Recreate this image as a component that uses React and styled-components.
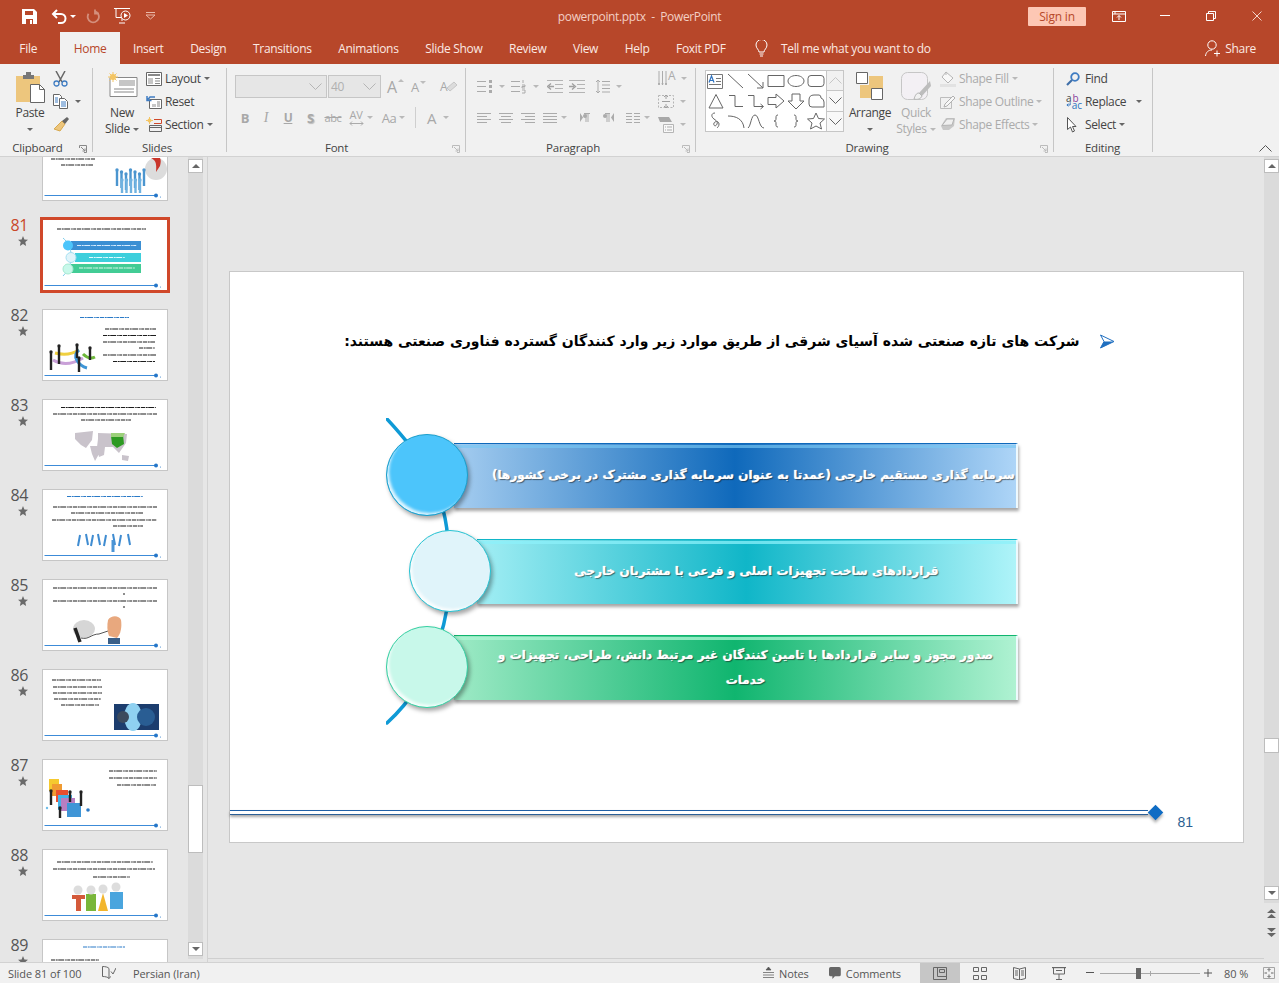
import React from 'react'
import styled, { createGlobalStyle } from 'styled-components'

const ACCENT = '#b7472a'
const INK = '#444'
const OFF = '#ababab'

const GlobalStyle = createGlobalStyle`
   html, body {
      margin: 0;
      padding: 0;
      overflow: hidden;
   }
   body {
      font-family: "Open Sans", "Noto Sans", sans-serif;
      font-size: 12px;
      color: ${INK};
      background: #e6e6e6;
   }
   svg {
      display: block;
   }
`

const Window = styled.div`
   width: 1279px;
   height: 983px;
   display: grid;
   grid-template-rows: 32px 32px 93px 1fr 21px;
   overflow: hidden;
`

/* title bar */
const TitleBar = styled.header`
   background: ${ACCENT};
   display: grid;
   grid-template-columns: 1fr auto 1fr;
   align-items: center;
   color: #fff;
`
const QuickAccess = styled.div`
   display: flex;
   align-items: center;
   padding-left: 22px;
`
const QuickItem = styled.div`
   width: ${p => p.$w}px;
   display: flex;
   align-items: center;
   gap: 3px;
`
const DocTitle = styled.div`
   font-size: 12px;
   letter-spacing: -0.35px;
   color: #f3cfc4;
   white-space: pre;
`
const WindowControls = styled.div`
   display: flex;
   align-items: center;
   justify-content: flex-end;
`
const SignIn = styled.button`
   width: 58px;
   height: 19px;
   border: 0;
   border-radius: 1px;
   padding: 0;
   margin-right: 10px;
   background: #fdc7b4;
   color: ${ACCENT};
   font: 12px "Open Sans", sans-serif;
   letter-spacing: -0.2px;
`
const ControlCell = styled.div`
   width: ${p => p.$w || 46}px;
   display: flex;
   justify-content: center;
`

/* tabs */
const TabBar = styled.nav`
   background: ${ACCENT};
   display: flex;
   align-items: stretch;
   padding-left: 6px;
   color: #fbe9e3;
   letter-spacing: -0.3px;
`
const Tab = styled.div`
   padding: 0 13.3px;
   margin-right: ${p => p.$mr || 0}px;
   display: flex;
   align-items: center;
   white-space: nowrap;
   background: ${p => (p.$active ? '#f1f1f1' : 'transparent')};
   color: ${p => (p.$active ? ACCENT : '#fbe9e3')};
`
const TellMe = styled.div`
   display: flex;
   align-items: center;
   gap: 13px;
   margin-left: 16px;
`
const Share = styled.div`
   display: flex;
   align-items: center;
   gap: 5px;
   margin-left: auto;
   padding-right: 23px;
`

/* ribbon */
const Ribbon = styled.section`
   position: relative;
   display: flex;
   background: #f1f1f1;
   border-bottom: 1px solid #d2d2d2;
   padding-top: 4px;
   letter-spacing: -0.35px;
`
const Group = styled.div`
   position: relative;
   width: ${p => p.$w}px;
   height: 88px;
   display: flex;
   flex-direction: column;
   &::after {
      content: '';
      position: absolute;
      right: 0;
      top: 0;
      width: 1px;
      height: 84px;
      background: #c6c6c6;
   }
`
const GroupBody = styled.div`
   flex: 1;
   display: flex;
   padding-left: ${p => p.$pl}px;
   gap: ${p => p.$gap || 0}px;
`
const GroupLabel = styled.div`
   height: 16px;
   line-height: 16px;
   font-size: 11.5px;
   letter-spacing: -0.2px;
   text-align: center;
   padding-top: 2px;
   padding-right: ${p => p.$pr || 0}px;
`
const Launcher = styled.span`
   position: absolute;
   right: 6px;
   bottom: 3px;
`
const BigButton = styled.div`
   width: ${p => p.$w}px;
   margin-left: ${p => p.$ml || 0}px;
   display: flex;
   flex-direction: column;
   align-items: center;
   padding-top: 4px;
   line-height: 16px;
   color: ${p => (p.$off ? OFF : INK)};
   white-space: nowrap;
`
const BigIcon = styled.div`
   height: 33px;
   display: flex;
   align-items: flex-start;
`
const CaretLine = styled.div`
   height: 16px;
   display: flex;
   align-items: center;
   gap: 3px;
`
const Caret = styled.span`
   display: inline-block;
   flex: none;
   width: 0;
   height: 0;
   border-left: 3px solid transparent;
   border-right: 3px solid transparent;
   border-top: 3px solid ${p => p.$c || (p.$off ? '#b9b9b9' : '#666')};
   margin-left: ${p => p.$ml || 0}px;
`
const TinyUp = styled.span`
   align-self: flex-start;
   margin: 3px 0 0 -2px;
   width: 0;
   height: 0;
   border-left: 3px solid transparent;
   border-right: 3px solid transparent;
   border-bottom: 3px solid #bdbdbd;
`
const TinyDown = styled(TinyUp)`
   border-bottom: 0;
   border-top: 3px solid #bdbdbd;
`
const SmallColumn = styled.div`
   display: flex;
   flex-direction: column;
   margin: -1px 0 0 ${p => p.$ml || 0}px;
`
const SmallRow = styled.div`
   height: 23px;
   display: flex;
   align-items: center;
   gap: ${p => p.$gap ?? 3}px;
   color: ${p => (p.$off ? OFF : INK)};
   white-space: nowrap;
`
const ControlRows = styled.div`
   width: ${p => (p.$w ? `${p.$w}px` : 'auto')};
   display: flex;
   flex-direction: column;
   gap: 8px;
   padding-top: 7px;
`
const ControlRow = styled.div`
   height: 23px;
   display: flex;
   align-items: center;
`
const Combo = styled.div`
   width: ${p => p.$w}px;
   height: 23px;
   box-sizing: border-box;
   background: #e6e6e6;
   border: 1px solid #c6c6c6;
   display: flex;
   align-items: center;
   justify-content: space-between;
   padding: 0 4px 0 2px;
   color: #b0b0b0;
   margin-right: 1px;
`
const Cell = styled.div`
   width: ${p => p.$w}px;
   margin-left: ${p => p.$ml || 0}px;
   display: flex;
   align-items: center;
   justify-content: ${p => p.$start ? 'flex-start' : 'center'};
   gap: 3px;
   color: #a8a8a8;
   font-family: ${p => p.$serif ? '"Liberation Serif", serif' : '"Open Sans", sans-serif'};
   font-size: ${p => p.$fs || 12}px;
   font-weight: ${p => p.$bold ? 700 : 400};
   font-style: ${p => p.$italic ? 'italic' : 'normal'};
   text-decoration: ${p => p.$under ? 'underline' : p.$strike ? 'line-through' : 'none'};
   text-shadow: ${p => p.$shadow ? '1px 1px 1px #bbb' : 'none'};
`
const AvStack = styled.span`
   display: flex;
   flex-direction: column;
   align-items: center;
   font-size: 11px;
   line-height: 11px;
   gap: 1px;
`
const EraserWrap = styled.span`
   display: flex;
   align-items: center;
   font-size: 12px;
`
const CellDivider = styled.div`
   width: 1px;
   height: 21px;
   background: #cfcfcf;
   margin: 0 11px 0 5px;
`
const IconLetter = styled.span`
   color: #ababab;
   font-size: 12px;
   margin-left: -7px;
   align-self: flex-start;
   line-height: 12px;
   padding-top: 3px;
`
const ReplaceGlyph = styled.span`
   width: 16px;
   display: flex;
   flex-direction: column;
   font-size: 10px;
   line-height: 7px;
   letter-spacing: 0;
   gap: 0;
`
const GlyphLine = styled.span`
   display: flex;
   align-items: center;
   height: 7px;
   color: ${p => p.$c};
   gap: 1px;
`
const GlyphPurple = styled.span`
   color: #8a3f9c;
`
const Gallery = styled.div`
   display: flex;
   height: 62px;
   margin-top: 2px;
`
const GalleryGrid = styled.div`
   width: 122px;
   height: 62px;
   box-sizing: border-box;
   background: #fff;
   border: 1px solid #c6c6c6;
   display: grid;
   grid-template-columns: repeat(6, 20px);
   grid-auto-rows: 20px;
`
const GalleryScroll = styled.div`
   width: 17px;
   display: flex;
   flex-direction: column;
`
const GalleryArrow = styled.div`
   flex: 1;
   box-sizing: border-box;
   border: 1px solid #c6c6c6;
   border-left: 0;
   margin-top: ${p => p.$first ? 0 : -1}px;
   display: flex;
   align-items: center;
   justify-content: center;
   background: ${p => p.$off ? '#f1f1f1' : '#f8f8f8'};
`
const CollapseRibbon = styled.span`
   position: absolute;
   right: 7px;
   bottom: 4px;
`

/* workspace */
const Workspace = styled.main`
   display: flex;
   min-height: 0;
   background: #e6e6e6;
`
const SlidePanel = styled.aside`
   width: 207px;
   display: flex;
   border-right: 1px solid #d2d2d2;
   height: 805px;
`
const ThumbList = styled.div`
   width: 188px;
   overflow: hidden;
`
const ThumbEntry = styled.div`
   height: 90px;
   display: flex;
   position: relative;
   top: -28px;
`
const ThumbMeta = styled.div`
   width: 42px;
   flex: none;
   display: flex;
   flex-direction: column;
   align-items: flex-end;
   padding-right: 14px;
   box-sizing: border-box;
   margin-top: -4px;
   gap: 1px;
   font-size: 16px;
   letter-spacing: -0.4px;
   line-height: 20px;
   color: ${p => (p.$active ? '#c9482a' : '#555')};
`
const ThumbFrame = styled.div`
   width: 126px;
   height: 72px;
   box-sizing: border-box;
   background: #fff;
   border: 1px solid ${p => (p.$active ? '#d0482a' : '#c6c6c6')};
   box-shadow: ${p => (p.$active ? '0 0 0 2px #d0482a' : 'none')};
   overflow: hidden;
   svg {
      filter: blur(0.5px);
   }
`
const ScrollBar = styled.div`
   position: relative;
   width: 15px;
   background: #dbdbdb;
   display: flex;
   flex-direction: column;
   justify-content: space-between;
   padding: 2px 0 3px;
   height: ${p => p.$h}px;
   box-sizing: border-box;
`
const ScrollButton = styled.div`
   height: 14px;
   box-sizing: border-box;
   background: #fff;
   border: 1px solid #bdbdbd;
   display: flex;
   align-items: center;
   justify-content: center;
`
const ScrollThumb = styled.div`
   position: absolute;
   left: 0;
   top: ${p => p.$top}px;
   width: 15px;
   height: ${p => p.$h}px;
   box-sizing: border-box;
   background: #fff;
   border: 1px solid #bdbdbd;
`
const ArrowUp = styled.span`
   width: 0;
   height: 0;
   border-left: 4px solid transparent;
   border-right: 4px solid transparent;
   border-bottom: 4px solid #666;
`
const ArrowDown = styled.span`
   width: 0;
   height: 0;
   border-left: 4px solid transparent;
   border-right: 4px solid transparent;
   border-top: 4px solid #666;
`
const Editor = styled.div`
   flex: 1;
   display: flex;
   flex-direction: column;
`
const Stage = styled.div`
   height: 802px;
   display: flex;
   align-items: center;
   justify-content: center;
   border-bottom: 1px solid #cfcfcf;
   box-sizing: border-box;
   padding-bottom: 1px;
`
const RightRail = styled.div`
   width: 15px;
   display: flex;
   flex-direction: column;
`
const PageJump = styled.div`
   display: flex;
   flex-direction: column;
   align-items: center;
   gap: 8px;
   padding-top: 6px;
`

/* slide */
const Slide = styled.article`
   width: 1015px;
   height: 572px;
   box-sizing: border-box;
   background: #fff;
   border: 1px solid #c8c8c8;
   display: flex;
   flex-direction: column;
`
const Heading = styled.div`
   display: flex;
   justify-content: flex-end;
   align-items: center;
   gap: 20px;
   height: 26px;
   margin-top: 56px;
   padding-right: 128px;
   color: #000;
`
const HeadingText = styled.h2`
   margin: 0;
   font: 700 14px "DejaVu Sans", sans-serif;
   white-space: nowrap;
`
const Diagram = styled.div`
   position: relative;
   width: 640px;
   margin: 64px 0 0 156px;
   padding: 16px 0 15px;
   display: flex;
   flex-direction: column;
   gap: 14px;
`
const DiagramArc = styled.svg`
   position: absolute;
   left: 0;
   top: 0;
`
const DiagramRow = styled.div`
   position: relative;
   display: flex;
   align-items: center;
   height: 82px;
   padding-left: ${p => p.$indent}px;
`
const Bubble = styled.div`
   position: relative;
   z-index: 1;
   flex: none;
   width: 82px;
   height: 82px;
   box-sizing: border-box;
   border-radius: 50%;
   background: ${p => p.$fill};
   border: 1px solid ${p => p.$ring};
   box-shadow: inset 3px -3px 3px -1px rgba(255, 255, 255, 0.85), 2px 3px 4px rgba(0, 0, 0, 0.35);
`
const Bar = styled.div`
   position: relative;
   width: ${p => p.$w}px;
   margin-left: -14px;
   height: 65px;
   box-sizing: border-box;
   display: flex;
   align-items: center;
   justify-content: center;
   padding: ${p => p.$pad};
   text-align: center;
   color: #fff;
   font: 700 ${p => p.$fs}px/25px "DejaVu Sans", sans-serif;
   letter-spacing: -0.55px;
   white-space: nowrap;
   text-shadow: 1px 1px 1px rgba(0, 0, 0, 0.5), 0 0 1px #fff;
   background: linear-gradient(90deg, ${p => p.$from}, ${p => p.$mid} 50%, ${p => p.$to});
   border-top: 1px solid ${p => p.$mid};
   border-right: 2px solid #eef9fd;
   box-shadow: 1px 3px 3px rgba(0, 0, 0, 0.35);
   &::before {
      content: '';
      position: absolute;
      left: 0;
      right: 0;
      top: 1px;
      height: 3px;
      background: ${p => p.$shine};
   }
`
const FooterRule = styled.div`
   margin-top: auto;
   display: flex;
   align-items: center;
   height: 16px;
   padding-right: 80px;
`
const RuleLine = styled.div`
   flex: 1;
   height: 3px;
   border-top: 1px solid #1f5fa5;
   border-bottom: 1px solid #2b5f96;
   box-shadow: 0 2px 3px rgba(0, 0, 0, 0.35);
`
const RuleDiamond = styled.div`
   width: 11px;
   height: 11px;
   margin: 0 2px 0 2px;
   transform: rotate(45deg);
   background: #0f6cc4;
   box-shadow: 2px 2px 3px rgba(0, 0, 0, 0.3);
`
const PageNumber = styled.div`
   margin: -6px 0 12px 948px;
   font: 14px/16px "Liberation Sans", sans-serif;
   color: #2c5f92;
`

/* status bar */
const StatusBar = styled.footer`
   background: #f1f1f1;
   border-top: 1px solid #d2d2d2;
   display: flex;
   align-items: center;
   font-size: 11px;
   letter-spacing: -0.1px;
   color: #555;
   padding-left: 8px;
   height: 21px;
   box-sizing: border-box;
`
const StatusItem = styled.div`
   display: flex;
   align-items: center;
   gap: 5px;
   height: 100%;
   white-space: nowrap;
   flex: none;
   width: ${p => (p.$w ? `${p.$w}px` : 'auto')};
   justify-content: ${p => (p.$center ? 'center' : 'flex-start')};
   background: ${p => (p.$active ? '#c6c6c6' : 'transparent')};
   margin-left: ${p => p.$ml || 0}px;
`
const ZoomTrack = styled.div`
   position: relative;
   width: 100px;
   height: 1px;
   background: #a8a8a8;
   margin: 0 4px 0 6px;
`
const ZoomHandle = styled.span`
   position: absolute;
   left: 36px;
   top: -5px;
   width: 5px;
   height: 11px;
   background: #666;
`
const ZoomTick = styled.span`
   position: absolute;
   left: 50px;
   top: -2px;
   width: 1px;
   height: 5px;
   background: #a8a8a8;
`

/* icons */
const Svg = ({ w, h, children, ...rest }) => (
   <svg width={w} height={h} viewBox={`0 0 ${w} ${h}`} fill="none" {...rest}>{children}</svg>
)

const SaveIcon = () => (
   <Svg w={15} h={15}>
      <path d="M0 0h12l3 3v12H0z" fill="#fff" />
      <path d="M3 2h8v4H3zM4 10h7v5H4z" fill={ACCENT} />
      <path d="M8 11h2v4H8z" fill="#fff" />
   </Svg>
)
const UndoIcon = () => (
   <Svg w={16} h={15}>
      <path d="M6 1 2 5l4 4M2 5h8a4.5 4.5 0 0 1 0 9H7" stroke="#fff" strokeWidth="2" />
   </Svg>
)
const RedoIcon = () => (
   <Svg w={14} h={15}>
      <path d="M9 2.4a5.6 5.6 0 1 1-6.5 2.4M9 .5v4H13" stroke="#d48f7c" strokeWidth="1.8" />
   </Svg>
)
const StartIcon = () => (
   <Svg w={17} h={16}>
      <path d="M0 .5h16M2 .5v9h6M8 10v3M5 15h6" stroke="#fff" />
      <circle cx="11.5" cy="7.5" r="4.5" stroke="#fff" fill={ACCENT} />
      <path d="m10 5 4 2.5-4 2.5z" fill="#fff" />
   </Svg>
)
const CustomizeIcon = () => (
   <Svg w={11} h={8}>
      <path d="M1 .5h9M1 3l4.5 4L10 3z" stroke="#eab8a8" />
   </Svg>
)
const BoardIcon = () => (
   <Svg w={14} h={11}>
      <path d="M.5.5h13v10H.5zM.5 3h13M3 .5V3" stroke="#fff" />
      <path d="m7 9V4.5M5 6.5l2-2 2 2" stroke="#fff" />
   </Svg>
)
const RestoreIcon = () => (
   <Svg w={10} h={10}>
      <path d="M.5 2.5h7v7h-7zM2.5 2.5v-2h7v7h-2" stroke="#fff" />
   </Svg>
)
const CloseIcon = () => (
   <Svg w={10} h={10}>
      <path d="m.5.5 9 9m0-9-9 9" stroke="#f3d4ca" />
   </Svg>
)
const BulbIcon = () => (
   <Svg w={13} h={17}>
      <path d="M4 12c0-2.500-3-3.500-3-7a5.500 5.500 0 0 1 11 0c0 3.500-3 4.500-3 7zM4.500 14h4M5 16h3" stroke="#fff" />
   </Svg>
)
const PersonIcon = () => (
   <Svg w={15} h={17}>
      <circle cx="7" cy="5" r="4.200" stroke="#fff" />
      <path d="M.5 16c.5-4 3-6 6.500-6M9 13.500h6M12 10.500v6" stroke="#fff" />
   </Svg>
)
const PasteIcon = () => (
   <Svg w={29} h={31}>
      <path d="M0 4h24v26H0z" fill="#edc67d" />
      <path d="M7 3h3V0h5v3h3v4H7z" fill="#777" />
      <path d="M14.500 12.500h9l5 5v13h-14z" fill="#fff" stroke="#666" />
      <path d="M23.500 12.500v5h5" stroke="#666" />
   </Svg>
)
const CutIcon = () => (
   <Svg w={15} h={16}>
      <path d="m3 0 6 11M12 0 6 11" stroke="#666" strokeWidth="1.500" />
      <circle cx="3.500" cy="12.500" r="2.500" stroke="#3f7cc2" strokeWidth="1.300" />
      <circle cx="11.500" cy="12.500" r="2.500" stroke="#3f7cc2" strokeWidth="1.300" />
   </Svg>
)
const CopyIcon = () => (
   <Svg w={15} h={15}>
      <path d="M.5.5h6l2 2v9h-8z" fill="#fff" stroke="#666" />
      <path d="M6.500 4.500h5l3 3v7h-8z" fill="#fff" stroke="#666" />
      <path d="M8 8h5M8 10h5M8 12h5M2 4h3M2 6h3M2 8h3" stroke="#3f7cc2" />
   </Svg>
)
const BrushIcon = () => (
   <Svg w={16} h={15}>
      <path d="m9 4 3 3-5 7-6-2z" fill="#edc67d" stroke="#d8a94e" />
      <path d="m9 4 5-4 2 2-4 5z" fill="#666" />
   </Svg>
)
const NewSlideIcon = () => (
   <Svg w={31} h={26}>
      <path d="M3 5.500h27v19H3z" fill="#fff" stroke="#888" />
      <path d="M12 8h16v6H12z" fill="#c6c6c6" />
      <path d="M7 17h20M7 20h20" stroke="#888" />
      <circle cx="6" cy="5" r="3" fill="#f4c563" />
      <path d="M6 0v10M1 5h10M2.500 1.500l7 7m0-7-7 7" stroke="#f4c563" />
   </Svg>
)
const LayoutIcon = () => (
   <Svg w={16} h={14}>
      <path d="M.5.500h15v13H.500z" fill="#fff" stroke="#666" />
      <path d="M2 3h12" stroke="#888" strokeWidth="2" />
      <path d="M2 6h5v6H2z" fill="#c6c6c6" />
      <path d="M9 6.500h5M9 9h5M9 11.500h5" stroke="#888" />
   </Svg>
)
const ResetIcon = () => (
   <Svg w={16} h={14}>
      <path d="M3.500 4.500h12v9h-12z" fill="#fff" stroke="#666" />
      <path d="M6 9h4v3H6z" fill="#c6c6c6" />
      <path d="M11 7h3M11 9h3M11 11h3" stroke="#888" />
      <path d="M9 2H4L1.500 5M1 1v4.500h4.500" stroke="#3f7cc2" strokeWidth="1.500" />
   </Svg>
)
const SectionIcon = () => (
   <Svg w={16} h={15}>
      <circle cx="3.500" cy="3.500" r="2" fill="#f4c563" />
      <path d="M3.500 0v7M0 3.500h7" stroke="#f4c563" />
      <path d="M8 2.500h7.500M8 6.500h7.500V2.500" stroke="#d0482a" />
      <path d="M3.500 8.500h12v6h-12zM3.500 10.500h12" stroke="#666" />
   </Svg>
)
const EraserIcon = () => (
   <Svg w={11} h={11}>
      <path d="m3 10 7-6-3-3-7 6z" fill="#dcdcdc" stroke="#c6c6c6" />
   </Svg>
)
const Rows = ({ w = 15, rows, x = 0, stroke = '#ababab', h = 14 }) => (
   <Svg w={w} h={h}>
      {rows.map(([a, b, y]) => <path key={y + '' + a} d={`M${a + x} ${y}.5H${b + x}`} stroke={stroke} />)}
   </Svg>
)
const BulletsIcon = () => (
   <Svg w={15} h={14}>
      <path d="M0 1.500h9M0 6.500h9M0 11.500h9" stroke="#ababab" />
      <path d="M12 0h3v3h-3zM12 5h3v3h-3zM12 10h3v3h-3z" fill="#ababab" />
   </Svg>
)
const NumbersIcon = () => (
   <Svg w={15} h={14}>
      <path d="M0 1.500h9M0 6.500h9M0 11.500h9M12 0v3M11 5h3v1.500h-3V8h3M11 10h3v3h-3" stroke="#ababab" />
   </Svg>
)
const IndentIcon = ({ flip }) => (
   <Svg w={16} h={13}>
      <path d="M0 .5h16M0 12.500h16M8 4.500h8M8 8.500h8" stroke="#b4b4b4" />
      <path d={flip ? 'M0 6.500h5M3 3.500l3.500 3-3.500 3' : 'M7 6.500H2M4 3.500l-3.500 3 3.500 3'} stroke="#a0a0a0" strokeWidth="1.300" />
   </Svg>
)
const SpacingIcon = () => (
   <Svg w={15} h={15}>
      <path d="M3 1v13M1 3l2-2 2 2M1 12l2 2 2-2M7 2.500h8M7 6h8M7 9.500h8M7 13h8" stroke="#ababab" />
   </Svg>
)
const MarkIcon = ({ flip }) => (
   <Svg w={12} h={9}>
      <path d={flip ? 'M12 0v9l-3-4.500z' : 'M0 0v9l3-4.500z'} fill="#ababab" />
      <path d={flip ? 'M3 .5H8M5 0v9M7 0v9' : 'M4 .5H10M6 0v9M8 0v9'} stroke="#ababab" />
      <circle cx={flip ? 3 : 5} cy="3" r="2" fill="#ababab" />
   </Svg>
)
const TextDirIcon = () => (
   <Svg w={11} h={16}>
      <path d="M1 0v14M4.500 0v14M8 0v14M.5 12l.5 2 .5-2M4 12l.5 2 .5-2M7.500 12l.5 2 .5-2" stroke="#ababab" />
   </Svg>
)
const AlignTextIcon = () => (
   <Svg w={16} h={15}>
      <path d="M.5 1.500h15v12H.5z" stroke="#b5b5b5" strokeDasharray="2 1.500" />
      <path d="M8 1v4M6 3l2-2 2 2M8 14v-4M6 12l2 2 2-2M4 7.500h8" stroke="#a0a0a0" />
   </Svg>
)
const SmartIcon = () => (
   <Svg w={16} h={16}>
      <path d="m0 0h11l3 5H2z" fill="#a8a8a8" />
      <path d="M5.500 7.500h10v8h-10z" fill="#f8f8f8" stroke="#b5b5b5" />
      <path d="M7 10h1M9 10h5M7 13h1M9 13h5" stroke="#ababab" />
   </Svg>
)
const ArrangeIcon = () => (
   <Svg w={28} h={29}>
      <path d="M13 4h14v13h-14zM4 13h13v13H4z" fill="#edc67d" />
      <path d="M.5.5h11v11H.5z" fill="#fff" stroke="#666" />
      <path d="M15.500 16.500h11v11h-11z" fill="#fff" stroke="#666" />
   </Svg>
)
const QuickStylesIcon = () => (
   <Svg w={30} h={30}>
      <rect x=".5" y=".5" width="26" height="27" rx="6" fill="#f3f0f4" stroke="#c6c6c6" />
      <path d="M29 9 18 21l3 3L30 14z" fill="#bdbdbd" />
      <path d="M18 21c-3 0-4 3-5 6 3 1 7 0 8-3z" fill="#f1f1f1" stroke="#b5b5b5" />
   </Svg>
)
const FillIcon = () => (
   <Svg w={16} h={16}>
      <path d="m6 1 7 6-5 5-6-6z" fill="#f8f8f8" stroke="#b5b5b5" />
      <path d="M6 1v3" stroke="#b5b5b5" />
      <path d="M0 13h16v3H0z" fill="#e2e2e2" />
   </Svg>
)
const OutlineIcon = () => (
   <Svg w={16} h={15}>
      <path d="M.5 3.500h11v11H.5z" stroke="#bdbdbd" />
      <path d="m5 10 8-8 2 2-8 8-3 1z" fill="#f8f8f8" stroke="#b0b0b0" />
   </Svg>
)
const EffectsIcon = () => (
   <Svg w={16} h={15}>
      <path d="M1 9 6 1h9l-1 8-5 4H3z" fill="#c8c8c8" />
      <path d="M2 8.500 7 2h7l-2 6z" fill="#efefef" stroke="#b5b5b5" />
   </Svg>
)
const FindIcon = () => (
   <Svg w={14} h={14}>
      <circle cx="9" cy="5" r="3.800" stroke="#3f7cc2" strokeWidth="1.800" />
      <path d="M6 8 1 13" stroke="#3f6fa8" strokeWidth="2.200" />
   </Svg>
)
const SelectIcon = () => (
   <Svg w={13} h={16}>
      <path d="M1.500.5v12l3-2.500 2 5 2-1-2-4.500H10z" fill="#fff" stroke="#555" />
   </Svg>
)
const LauncherIcon = ({ c = '#888' }) => (
   <Svg w={8} h={8}>
      <path d="M.5 3V.5H7.500V7.500H5M2 2l4 4M6 3.500V6H3.500" stroke={c} />
   </Svg>
)
const Chevron = ({ up, c = '#666' }) => (
   <Svg w={13} h={7}>
      <path d={up ? 'M.5 6.500l6-6 6 6' : 'M.5.5l6 6 6-6'} stroke={c} />
   </Svg>
)

const SHAPES = [
   'M3 14.500 17 14.500',
   'M2 3l15 14',
   'M2 3l15 14M17 11v6h-6',
   'M2 4.500h16v11H2z',
   'M10 4.500c4.500 0 8 2.500 8 5.500s-3.500 5.500-8 5.500-8-2.500-8-5.500 3.500-5.500 8-5.500z',
   'M5 4.500h10q3 0 3 3v5q0 3-3 3H5q-3 0-3-3v-5q0-3 3-3z',
   'M10 3.500 17 17H3z',
   'M3 4.500h6v11h8',
   'M2 4.500h6v11h9M14.500 13l3 2.500-3 2.500',
   'M2 6.500h8V3l8 7-8 7v-3.500H2z',
   'M6 3h8v7h4l-8 8-8-8h4z',
   'M3 9q0-5 5-5h5q2 0 2 3 3 1 3 4v5H6q-3 0-3-3z',
   'M9 2C5 2 5 6 8 8c3 2 4 3 3 5-1 3-4 2-3-1 1-2 5-2 5 1 0 2-1 3-2 4',
   'M2 5c8 0 15 3 16 12',
   'M2 17C5 15 5 4 9 4s4 13 9 13',
   'M12 4c-2 0-2 1-2 3s0 3-2 3c2 0 2 1 2 3s0 3 2 3',
   'M8 4c2 0 2 1 2 3s0 3 2 3c-2 0-2 1-2 3s0 3-2 3',
   'M10 2l2.500 5.500 6 .5-4.500 4 1.500 6-5.500-3-5.500 3 1.500-6L1.500 8l6-.5z',
]

const ShapeCell = ({ d, first }) => (
   <Svg w={20} h={20}>
      {first && <path d="M1.500 3.500h15v14h-15z" fill="#fff" stroke="#777" />}
      {first && <path d="M10 7.500h5M10 10.500h5M3 13.500h12" stroke="#777" />}
      {first && <path d="M3 11.500 5.500 5 8 11.500M4 9.500h3" stroke="#2f73c0" strokeWidth="1.200" />}
      {!first && <path d={d} stroke="#666" />}
   </Svg>
)

/* thumbnails */
const Scribble = ({ lines, color = '#1c1c1c' }) => lines.map(([a, b, y]) => (
   <path key={`${a}-${y}`} d={`M${a} ${y}H${b}`} stroke={color} strokeWidth="1.100" strokeDasharray="4 .7 2 .5 6 1 1.500 .5 3 .8" />
))

const People = ({ x, y, c = '#222', h = 18 }) => (
   <g>
      <circle cx={x} cy={y} r="1.700" fill={c} />
      <path d={`M${x} ${y + 1}V${y + h}`} stroke={c} strokeWidth="2.400" />
   </g>
)

const THUMBS = {
   80: (
      <>
         <Scribble lines={[[8, 52, 29], [18, 50, 35]]} />
         <ellipse cx="113" cy="39" rx="11" ry="11" fill="#dcdcdc" />
         <path d="M108 28c4 2 6 4 5 14l4-6c1-4 1-6 0-8z" fill="#c9352a" />
         {[0, 1, 2, 3, 4, 5, 6].map(i => <People key={i} x={74 + i * 4.500} y={40 + (i % 3) * 2} c="#4b95cf" h={16} />)}
         {[0, 1, 2, 3, 4].map(i => <People key={i} x={79 + i * 4.500} y={50} c="#6fb2e0" h={13} />)}
      </>
   ),
   81: (
      <>
         <Scribble lines={[[14, 103, 9]]} />
         <path d="M20 18c10 8 12 26 0 38" stroke="#7fcdeb" />
         <rect x="28" y="21" width="70" height="9" fill="#3b8fd3" />
         <rect x="32" y="33" width="66" height="9" fill="#3ecfdc" />
         <rect x="28" y="44" width="70" height="9" fill="#42cc95" />
         <Scribble lines={[[34, 94, 25.500]]} color="#d8ecff" />
         <Scribble lines={[[46, 82, 37.500]]} color="#e4fbff" />
         <Scribble lines={[[36, 92, 48]]} color="#def8ec" />
         <circle cx="25" cy="25.500" r="5" fill="#4cc5fb" />
         <circle cx="28" cy="37.500" r="5" fill="#e0f4fa" stroke="#a5dff0" />
         <circle cx="25" cy="49" r="5" fill="#c8f8ea" stroke="#a5e8d0" />
      </>
   ),
   82: (
      <>
         <Scribble lines={[[37, 86, 7.500]]} color="#2a7ac7" />
         <Scribble lines={[[62, 113, 19], [60, 113, 25.500], [60, 112, 32], [96, 112, 38], [60, 113, 45], [70, 112, 51.500]]} />
         <path d="M10 50c10 6 20 4 30-2" stroke="#c9a0d8" strokeWidth="3" />
         <path d="M12 43c8 2 16 2 24-3" stroke="#f0d040" strokeWidth="3" />
         <path d="M36 40c-8 6 0 16 8 18" stroke="#3f95d6" strokeWidth="3" />
         <path d="M40 44c4 4 8 5 12 3" stroke="#6fb83c" strokeWidth="3" />
         <People x={8} y={42} /><People x={16} y={36} /><People x={34} y={35} h={13} /><People x={47} y={38} h={12} /><People x={36} y={48} h={14} />
      </>
   ),
   83: (
      <>
         <Scribble lines={[[18, 113, 7.500], [10, 114, 14], [38, 88, 20]]} />
         <path d="M32 33 50 31l-1 9-6 8-5-3-6-6zM47 46h10l-1 8-4 7-3-7zM55 33l29 1-1 9-7 10-6-6h-8l-1 8-5 2-2-10 1-8zM79 55l7 1-1 5-6-1z" fill="#c9c3cb" />
         <path d="M68 36l12-1 1 9-7 4-5-4z" fill="#2d9a22" />
         <path d="M68 33h14l-2 4H68z" fill="#9cd07a" />
      </>
   ),
   84: (
      <>
         <Scribble lines={[[24, 100, 6.500]]} color="#2a7ac7" />
         <Scribble lines={[[10, 114, 17], [28, 100, 23], [9, 114, 30], [70, 100, 36]]} />
         {[37, 43, 50, 55, 63, 70, 78, 85].map((x, i) => (
            <path key={x} d={`M${x} ${45 - (i % 2)}l${i % 2 ? 2 : -2} 11`} stroke="#3f8cd1" strokeWidth="2" />
         ))}
         <path d="M70 50v12" stroke="#4b95d6" strokeWidth="3" />
      </>
   ),
   85: (
      <>
         <Scribble lines={[[10, 114, 8], [80, 82, 14], [10, 114, 21], [80, 82, 27]]} />
         <ellipse cx="41" cy="49" rx="11" ry="9" fill="#d6d6d6" />
         <path d="M32 48l5 14" stroke="#222" strokeWidth="3.500" />
         <path d="M38 58c8 2 10-4 18-4l9-3" stroke="#555" />
         <path d="M65 40c3-5 11-5 13 0 1 6 0 14-4 18l-8-2c-2-5-2-11-1-16z" fill="#e8a87e" />
         <path d="M65 58h12v6H65z" fill="#3a5f88" />
      </>
   ),
   86: (
      <>
         <Scribble lines={[[9, 58, 10], [10, 59, 17], [10, 59, 23], [11, 58, 29], [18, 56, 35]]} />
         <rect x="71" y="34" width="45" height="26" fill="#1c3d6e" />
         <ellipse cx="90" cy="47" rx="9" ry="14" fill="#8fd1f1" />
         <circle cx="103" cy="47" r="9" fill="#295d93" />
         <circle cx="80" cy="47" r="6" fill="#3b4a5e" />
      </>
   ),
   87: (
      <>
         <Scribble lines={[[66, 114, 11], [66, 114, 18], [74, 113, 25]]} />
         <rect x="6" y="19" width="10" height="12" fill="#f5c92f" />
         <rect x="9" y="24" width="10" height="12" fill="#f09b32" />
         <rect x="13" y="30" width="12" height="12" fill="#e94f2f" />
         <rect x="15" y="35" width="14" height="15" fill="#45b1e8" />
         <rect x="18" y="38" width="14" height="13" fill="#b77ec2" />
         <rect x="24" y="43" width="14" height="14" fill="#3f95d6" />
         <People x={8} y={31} h={14} /><People x={27} y={32} h={10} /><People x={38} y={32} h={14} /><People x={17} y={48} h={10} />
         <circle cx="45" cy="50" r="1.800" fill="#2a7ac7" /><circle cx="4" cy="48" r="1.200" fill="#70bde8" />
      </>
   ),
   88: (
      <>
         <Scribble lines={[[14, 110, 12], [10, 112, 19], [50, 87, 27]]} />
         <rect x="29" y="45" width="13" height="4" fill="#d45a3a" /><rect x="33" y="45" width="5" height="16" fill="#d45a3a" />
         <rect x="43" y="44" width="10" height="17" fill="#79b63a" />
         <path d="M55 61l5-18 5 18z" fill="#f2b52c" />
         <rect x="67" y="42" width="13" height="17" fill="#4aa5de" />
         <circle cx="35" cy="40" r="4.500" fill="#ddd" /><circle cx="48" cy="40" r="4.500" fill="#ddd" /><circle cx="60" cy="39" r="4.500" fill="#ddd" /><circle cx="73" cy="37" r="4.500" fill="#ddd" />
      </>
   ),
   89: (
      <>
         <Scribble lines={[[40, 82, 7]]} color="#2a7ac7" />
         <Scribble lines={[[8, 56, 20]]} />
      </>
   ),
}

const ThumbArt = ({ n }) => (
   <svg width="124" height="70" viewBox="0 0 124 70" fill="none">
      {THUMBS[n]}
      <path d="M1.500 65.500H112" stroke="#3c8bd8" strokeWidth="1.200" />
      <circle cx="113" cy="65.500" r="2" fill="#2576c8" />
      <circle cx="117.500" cy="67" r=".5" fill="#2576c8" />
   </svg>
)

const StarIcon = () => (
   <Svg w={10} h={10}>
      <path d="m5 0 1.400 3.400L10 3.800 7.300 6.100 8.100 10 5 8 1.900 10l.8-3.900L0 3.800l3.600-.4z" fill="#6a6a6a" />
   </Svg>
)

const BulletArrow = () => (
   <Svg w={15} h={15}>
      <path d="M.5 1 14 7.500.5 14 4 7.500z" fill="#fff" stroke="#1f6fc0" />
      <path d="M4 7.500h10L.5 14z" fill="#1f6fc0" />
   </Svg>
)

/* status icons */
const NotesIcon = () => (
   <Svg w={11} h={12}>
      <path d="M3 3l2.500-3L8 3zM0 5.500h11M0 8h11M0 10.500h11" fill="#555" stroke="#555" strokeWidth=".7" />
   </Svg>
)
const CommentIcon = () => (
   <Svg w={14} h={14}>
      <path d="M2 0h10q2 0 2 2v7q0 2-2 2H7l-3 3v-3H2q-2 0-2-2V2q0-2 2-2z" fill="#666" />
   </Svg>
)
const SpellIcon = () => (
   <Svg w={14} h={14}>
      <path d="M7 2.500C6 1 3 .5.500.5v10c2.500 0 5.500.5 6.500 2 1-1.500 2-2 2-2M7 2.500v10M9 5.500l2 2.500 3-6" stroke="#666" />
   </Svg>
)
const NormalIcon = () => (
   <Svg w={14} h={13}>
      <path d="M.5.5h13v12H.5zM4.500.5v9M4.500 9.500h9M6.500 2.500h5v3h-5z" stroke="#666" />
   </Svg>
)
const SorterIcon = () => (
   <Svg w={14} h={13}>
      <path d="M.5.5h5v4h-5zM8.500.5h5v4h-5zM.5 8.500h5v4h-5zM8.500 8.500h5v4h-5z" stroke="#666" />
   </Svg>
)
const ReadingIcon = () => (
   <Svg w={13} h={13}>
      <path d="M.5.500 6.500 2l6-1.500v11l-6 1.500-6-1.500zM6.500 2v11M2 4h3M2 6h3M2 8h3M8 4h3M8 6h3M8 8h3" stroke="#666" />
   </Svg>
)
const ShowIcon = () => (
   <Svg w={14} h={13}>
      <path d="M0 .5h14" stroke="#666" strokeWidth="1.400" />
      <path d="M1.500 1v6h11V1M4 3.500h6M7 7v5M4 12.500h6" stroke="#666" />
   </Svg>
)
const FitIcon = () => (
   <Svg w={12} h={12}>
      <path d="M.5.500h11v11H.5z" stroke="#a5a5a5" />
      <path d="M6 2v2.500M4.500 3 6 1.500 7.500 3M6 10V7.500M4.500 9 6 10.500 7.500 9M1.500 6h2.500M8 6h2.500" stroke="#666" />
   </Svg>
)
const JumpIcon = ({ down }) => (
   <Svg w={9} h={10}>
      <path d={down ? 'M4.500 5 9 1H0zM4.500 10 9 6H0z' : 'M4.500 0 9 4H0zM4.500 5 9 9H0z'} fill="#666" />
   </Svg>
)

const Small = ({ icon, label, caret, off, caretGap }) => (
   <SmallRow $off={off}>
      {icon}
      <span>{label}</span>
      {caret && <Caret $off={off} $ml={caretGap} />}
   </SmallRow>
)

const TABS = ['Insert', 'Design', 'Transitions', 'Animations', 'Slide Show', 'Review', 'View', 'Help', 'Foxit PDF']
const NUMBERS = [80, 81, 82, 83, 84, 85, 86, 87, 88, 89]

const App = () => {
   return (
      <Window>
         <GlobalStyle />
         <TitleBar>
            <QuickAccess>
               <QuickItem $w={29}><SaveIcon /></QuickItem>
               <QuickItem $w={35}><UndoIcon /><Caret $c="#fff" /></QuickItem>
               <QuickItem $w={28}><RedoIcon /></QuickItem>
               <QuickItem $w={31}><StartIcon /></QuickItem>
               <QuickItem $w={20}><CustomizeIcon /></QuickItem>
            </QuickAccess>
            <DocTitle>powerpoint.pptx  -  PowerPoint</DocTitle>
            <WindowControls>
               <SignIn>Sign in</SignIn>
               <ControlCell><BoardIcon /></ControlCell>
               <ControlCell>
                  <Svg w={10} h={2}><path d="M0 .5h10" stroke="#fff" /></Svg>
               </ControlCell>
               <ControlCell><RestoreIcon /></ControlCell>
               <ControlCell $w={45}><CloseIcon /></ControlCell>
            </WindowControls>
         </TitleBar>

         <TabBar>
            <Tab $mr={10}>File</Tab>
            <Tab $active>Home</Tab>
            {TABS.map(t => <Tab key={t}>{t}</Tab>)}
            <TellMe><BulbIcon />Tell me what you want to do</TellMe>
            <Share><PersonIcon />Share</Share>
         </TabBar>

         <Ribbon>
            <Group $w={93}>
               <GroupBody $pl={14} $gap={7}>
                  <BigButton $w={32}>
                     <BigIcon><PasteIcon /></BigIcon>
                     <span>Paste</span>
                     <CaretLine><Caret /></CaretLine>
                  </BigButton>
                  <SmallColumn>
                     <SmallRow><CutIcon /></SmallRow>
                     <SmallRow $gap={7}><CopyIcon /><Caret /></SmallRow>
                     <SmallRow><BrushIcon /></SmallRow>
                  </SmallColumn>
               </GroupBody>
               <GroupLabel $pr={18}>Clipboard</GroupLabel>
               <Launcher><LauncherIcon /></Launcher>
            </Group>

            <Group $w={134}>
               <GroupBody $pl={9} $gap={4}>
                  <BigButton $w={40}>
                     <BigIcon><NewSlideIcon /></BigIcon>
                     <span>New</span>
                     <CaretLine>Slide<Caret /></CaretLine>
                  </BigButton>
                  <SmallColumn>
                     <Small icon={<LayoutIcon />} label="Layout" caret />
                     <Small icon={<ResetIcon />} label="Reset" />
                     <Small icon={<SectionIcon />} label="Section" caret />
                  </SmallColumn>
               </GroupBody>
               <GroupLabel $pr={6}>Slides</GroupLabel>
            </Group>

            <Group $w={239}>
               <GroupBody $pl={8}>
                  <ControlRows>
                     <ControlRow>
                        <Combo $w={92}><span /><Chevron c="#b5b5b5" /></Combo>
                        <Combo $w={53}><span>40</span><Chevron c="#b5b5b5" /></Combo>
                        <Cell $w={24} $fs={16} $ml={5} $start>A<TinyUp /></Cell>
                        <Cell $w={20} $fs={13} $ml={0} $start>A<TinyDown /></Cell>
                        <Cell $w={22} $start $ml={9}>
                           <EraserWrap>A<EraserIcon /></EraserWrap>
                        </Cell>
                     </ControlRow>
                     <ControlRow>
                        <Cell $w={20} $bold $fs={13}>B</Cell>
                        <Cell $w={22} $italic $serif $fs={14}>I</Cell>
                        <Cell $w={22} $bold $under>U</Cell>
                        <Cell $w={23} $bold $fs={13} $shadow>S</Cell>
                        <Cell $w={22} $strike $fs={11}>abc</Cell>
                        <Cell $w={33}>
                           <AvStack>
                              AV
                              <Svg w={15} h={5}><path d="M1 2.500h13M3 .5l-2 2 2 2M12 .5l2 2-2 2" stroke="#ababab" /></Svg>
                           </AvStack>
                           <Caret $off />
                        </Cell>
                        <Cell $w={33} $fs={13}>Aa<Caret $off /></Cell>
                        <CellDivider />
                        <Cell $w={30} $fs={15} $start>A<Caret $off $ml={4} /></Cell>
                     </ControlRow>
                  </ControlRows>
               </GroupBody>
               <GroupLabel $pr={20}>Font</GroupLabel>
               <Launcher><LauncherIcon c="#bbb" /></Launcher>
            </Group>

            <Group $w={230}>
               <GroupBody $pl={11}>
                  <ControlRows $w={181}>
                     <ControlRow>
                        <Cell $w={34} $start><BulletsIcon /><Caret $off $ml={4} /></Cell>
                        <Cell $w={36} $start><NumbersIcon /><Caret $off $ml={4} /></Cell>
                        <Cell $w={22} $start><IndentIcon /></Cell>
                        <Cell $w={26} $start><IndentIcon flip /></Cell>
                        <Cell $w={30} $start><SpacingIcon /><Caret $off $ml={3} /></Cell>
                     </ControlRow>
                     <ControlRow>
                        <Cell $w={22} $start><Rows rows={[[0, 14, 2], [0, 10, 5], [0, 14, 8], [0, 10, 11]]} /></Cell>
                        <Cell $w={22} $start><Rows rows={[[0, 14, 2], [2, 12, 5], [0, 14, 8], [2, 12, 11]]} /></Cell>
                        <Cell $w={22} $start><Rows rows={[[0, 14, 2], [4, 14, 5], [0, 14, 8], [4, 14, 11]]} /></Cell>
                        <Cell $w={37} $start><Rows rows={[[0, 14, 2], [0, 14, 5], [0, 14, 8], [0, 14, 11]]} /><Caret $off /></Cell>
                        <Cell $w={22} $start><MarkIcon /></Cell>
                        <Cell $w={24} $start><MarkIcon flip /></Cell>
                        <Cell $w={30} $start><Rows rows={[[0, 6, 2], [8, 14, 2], [0, 6, 5], [8, 14, 5], [0, 6, 8], [8, 14, 8], [0, 6, 11], [8, 14, 11]]} /><Caret $off /></Cell>
                     </ControlRow>
                  </ControlRows>
                  <SmallColumn>
                     <SmallRow $gap={6}><TextDirIcon /><IconLetter>A</IconLetter><Caret $off /></SmallRow>
                     <SmallRow $gap={6}><AlignTextIcon /><Caret $off /></SmallRow>
                     <SmallRow $gap={6}><SmartIcon /><Caret $off /></SmallRow>
                  </SmallColumn>
               </GroupBody>
               <GroupLabel $pr={16}>Paragraph</GroupLabel>
               <Launcher><LauncherIcon c="#bbb" /></Launcher>
            </Group>

            <Group $w={358}>
               <GroupBody $pl={9}>
                  <Gallery>
                     <GalleryGrid>
                        {SHAPES.map((d, i) => <ShapeCell key={d} d={d} first={i === 0} />)}
                     </GalleryGrid>
                     <GalleryScroll>
                        <GalleryArrow $first $off><Chevron up c="#c6c6c6" /></GalleryArrow>
                        <GalleryArrow><Chevron c="#666" /></GalleryArrow>
                        <GalleryArrow><Chevron c="#666" /></GalleryArrow>
                     </GalleryScroll>
                  </Gallery>
                  <BigButton $w={50} $ml={1}>
                     <BigIcon><ArrangeIcon /></BigIcon>
                     <span>Arrange</span>
                     <CaretLine><Caret /></CaretLine>
                  </BigButton>
                  <BigButton $w={42} $off>
                     <BigIcon><QuickStylesIcon /></BigIcon>
                     <span>Quick</span>
                     <CaretLine>Styles<Caret $off /></CaretLine>
                  </BigButton>
                  <SmallColumn $ml={3}>
                     <Small off icon={<FillIcon />} label="Shape Fill" caret />
                     <Small off icon={<OutlineIcon />} label="Shape Outline" caret />
                     <Small off icon={<EffectsIcon />} label="Shape Effects" caret />
                  </SmallColumn>
               </GroupBody>
               <GroupLabel $pr={16}>Drawing</GroupLabel>
               <Launcher><LauncherIcon c="#bbb" /></Launcher>
            </Group>

            <Group $w={99}>
               <GroupBody $pl={12}>
                  <SmallColumn>
                     <SmallRow $gap={5}><FindIcon />Find</SmallRow>
                     <SmallRow $gap={3}>
                        <ReplaceGlyph>
                           <GlyphLine $c="#444">a<GlyphPurple>b</GlyphPurple></GlyphLine>
                           <GlyphLine $c="#2f73c0">
                              <Svg w={5} h={6}><path d="M4.500 0v3H1M2.500 1.500 1 3l1.500 1.500" stroke="#2f73c0" /></Svg>
                              ac
                           </GlyphLine>
                        </ReplaceGlyph>
                        Replace<Caret $ml={7} />
                     </SmallRow>
                     <SmallRow $gap={6}><SelectIcon />Select<Caret $ml={-3} /></SmallRow>
                  </SmallColumn>
               </GroupBody>
               <GroupLabel $pr={2}>Editing</GroupLabel>
            </Group>
            <CollapseRibbon><Chevron up c="#555" /></CollapseRibbon>
         </Ribbon>

         <Workspace>
            <SlidePanel>
               <ThumbList>
                  {NUMBERS.map(n => (
                     <ThumbEntry key={n}>
                        <ThumbMeta $active={n === 81}>
                           {n > 80 && n}
                           {n > 80 && <StarIcon />}
                        </ThumbMeta>
                        <ThumbFrame $active={n === 81}><ThumbArt n={n} /></ThumbFrame>
                     </ThumbEntry>
                  ))}
               </ThumbList>
               <ScrollBar $h={802}>
                  <ScrollButton><ArrowUp /></ScrollButton>
                  <ScrollThumb $top={628} $h={68} />
                  <ScrollButton><ArrowDown /></ScrollButton>
               </ScrollBar>
            </SlidePanel>

            <Editor>
               <Stage>
                  <Slide>
                     <Heading>
                        <HeadingText dir="rtl">شرکت های تازه صنعتی شده آسیای شرقی از طریق موارد زیر وارد کنندگان گسترده فناوری صنعتی هستند:</HeadingText>
                        <BulletArrow />
                     </Heading>
                     <Diagram>
                        <DiagramArc width="100" height="320" viewBox="0 0 100 320" fill="none">
                           <path d="M1 1C28 30 62 70 62 130C70 190 50 260 1 305" stroke="#0f9ad6" strokeWidth="3.500" strokeLinecap="round" />
                        </DiagramArc>
                        <DiagramRow $indent={0}>
                           <Bubble $fill="#4cc5fb" $ring="#1b9fcc" />
                           <Bar $w={564} $fs={12} $pad="0 0 0 38px" $from="#a5cdf0" $mid="#0f69bb" $to="#aed5f7" $shine="rgba(120, 200, 245, 0.65)" dir="rtl">
                              سرمایه گذاری مستقیم خارجی (عمدتا به عنوان سرمایه گذاری مشترک در برخی کشورها)
                           </Bar>
                        </DiagramRow>
                        <DiagramRow $indent={23}>
                           <Bubble $fill="#e0f4fa" $ring="#26c3d3" />
                           <Bar $w={541} $fs={12} $pad="0 0 0 21px" $from="#a2eef4" $mid="#10b6c8" $to="#aff4f9" $shine="rgba(140, 240, 250, 0.75)" dir="rtl">
                              قراردادهای ساخت تجهیزات اصلی و فرعی با مشتریان خارجی
                           </Bar>
                        </DiagramRow>
                        <DiagramRow $indent={0}>
                           <Bubble $fill="#c8f8ea" $ring="#35d0a2" />
                           <Bar $w={564} $fs={12} $pad="0 0 0 22px" $from="#9eeac6" $mid="#10b56f" $to="#aff2d2" $shine="rgba(170, 245, 210, 0.8)" dir="rtl">
                              <span>صدور مجوز و سایر قراردادها با تامین کنندگان غیر مرتبط دانش، طراحی، تجهیزات و<br />خدمات</span>
                           </Bar>
                        </DiagramRow>
                     </Diagram>
                     <FooterRule>
                        <RuleLine />
                        <RuleDiamond />
                     </FooterRule>
                     <PageNumber>81</PageNumber>
                  </Slide>
               </Stage>
            </Editor>

            <RightRail>
               <ScrollBar $h={746}>
                  <ScrollButton><ArrowUp /></ScrollButton>
                  <ScrollThumb $top={581} $h={15} />
                  <ScrollButton><ArrowDown /></ScrollButton>
               </ScrollBar>
               <PageJump>
                  <JumpIcon />
                  <JumpIcon down />
               </PageJump>
            </RightRail>
         </Workspace>

         <StatusBar>
            <StatusItem $w={94}>Slide 81 of 100</StatusItem>
            <StatusItem $w={31}><SpellIcon /></StatusItem>
            <StatusItem $w={66}>Persian (Iran)</StatusItem>
            <StatusItem $ml={564} $w={46}><NotesIcon />Notes</StatusItem>
            <StatusItem $ml={20} $w={72}><CommentIcon />Comments</StatusItem>
            <StatusItem $ml={19} $w={40} $center $active><NormalIcon /></StatusItem>
            <StatusItem $w={40} $center><SorterIcon /></StatusItem>
            <StatusItem $w={39} $center><ReadingIcon /></StatusItem>
            <StatusItem $w={39} $center><ShowIcon /></StatusItem>
            <StatusItem $ml={8}>
               <Svg w={8} h={2}><path d="M0 .5h8" stroke="#555" /></Svg>
            </StatusItem>
            <ZoomTrack><ZoomHandle /><ZoomTick /></ZoomTrack>
            <StatusItem>
               <Svg w={8} h={8}><path d="M0 4h8M4 0v8" stroke="#555" /></Svg>
            </StatusItem>
            <StatusItem $ml={12} $w={39}>80 %</StatusItem>
            <StatusItem><FitIcon /></StatusItem>
         </StatusBar>
      </Window>
   )
}

export default App
